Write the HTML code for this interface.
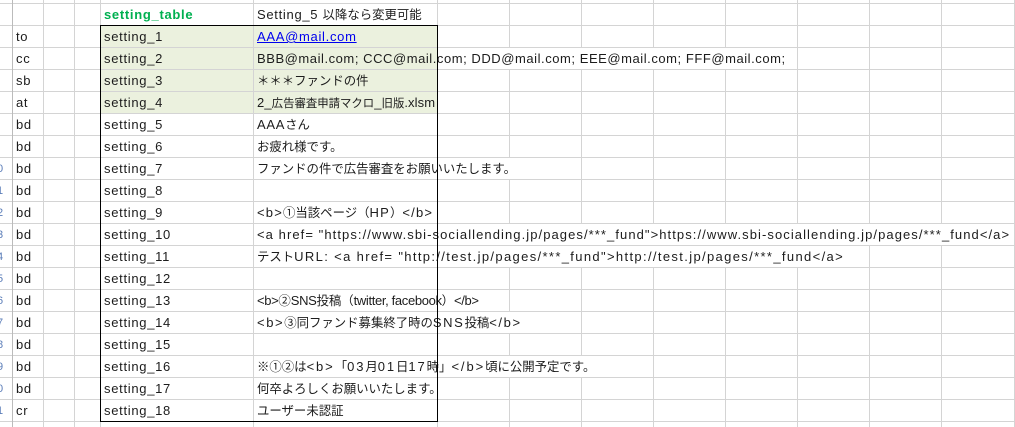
<!DOCTYPE html>
<html><head><meta charset="utf-8"><style>
body{margin:0;width:1015px;height:427px;overflow:hidden;background:#fff;position:relative;font-family:"Liberation Sans","Noto Sans CJK JP",sans-serif;font-size:13px;letter-spacing:.7px;color:#1c1c1c}
.h{position:absolute;left:0;width:1015px;height:1px;background:#d4d4d4}
.v{position:absolute;top:0;height:427px;width:1px;background:#d4d4d4}
.t{position:absolute;height:21px;line-height:21px;white-space:nowrap;background:#fff;padding-left:3px;box-sizing:border-box;overflow:hidden}
.j{font-size:12.4px;letter-spacing:0}
.g{background:#ebf1de}
.n{position:absolute;left:0;width:12px;height:21px;line-height:22px;overflow:hidden;font-size:11px;letter-spacing:0;color:#5b7db8}
.n span{position:absolute;left:-3px}
</style></head><body>
<div class="h" style="top:3px"></div><div class="h" style="top:25px"></div><div class="h" style="top:47px"></div><div class="h" style="top:69px"></div><div class="h" style="top:91px"></div><div class="h" style="top:113px"></div><div class="h" style="top:135px"></div><div class="h" style="top:157px"></div><div class="h" style="top:179px"></div><div class="h" style="top:201px"></div><div class="h" style="top:223px"></div><div class="h" style="top:245px"></div><div class="h" style="top:267px"></div><div class="h" style="top:289px"></div><div class="h" style="top:311px"></div><div class="h" style="top:333px"></div><div class="h" style="top:355px"></div><div class="h" style="top:377px"></div><div class="h" style="top:399px"></div><div class="h" style="top:421px"></div>
<div class="v" style="left:12px;background:#bbb"></div><div class="v" style="left:43px"></div><div class="v" style="left:74px"></div><div class="v" style="left:100px"></div><div class="v" style="left:253px"></div><div class="v" style="left:437px"></div><div class="v" style="left:509px"></div><div class="v" style="left:581px"></div><div class="v" style="left:653px"></div><div class="v" style="left:725px"></div><div class="v" style="left:797px"></div><div class="v" style="left:869px"></div><div class="v" style="left:941px"></div><div class="v" style="left:1014px"></div>

<div class="t" style="left:13px;top:26px;width:30px">to</div>
<div class="t" style="left:13px;top:48px;width:30px">cc</div>
<div class="t" style="left:13px;top:70px;width:30px">sb</div>
<div class="t" style="left:13px;top:92px;width:30px">at</div>
<div class="t" style="left:13px;top:114px;width:30px">bd</div>
<div class="t" style="left:13px;top:136px;width:30px">bd</div>
<div class="t" style="left:13px;top:158px;width:30px">bd</div>
<div class="t" style="left:13px;top:180px;width:30px">bd</div>
<div class="t" style="left:13px;top:202px;width:30px">bd</div>
<div class="t" style="left:13px;top:224px;width:30px">bd</div>
<div class="t" style="left:13px;top:246px;width:30px">bd</div>
<div class="t" style="left:13px;top:268px;width:30px">bd</div>
<div class="t" style="left:13px;top:290px;width:30px">bd</div>
<div class="t" style="left:13px;top:312px;width:30px">bd</div>
<div class="t" style="left:13px;top:334px;width:30px">bd</div>
<div class="t" style="left:13px;top:356px;width:30px">bd</div>
<div class="t" style="left:13px;top:378px;width:30px">bd</div>
<div class="t" style="left:13px;top:400px;width:30px">cr</div>

<div class="n" style="top:158px"><span>0</span></div><div class="n" style="top:180px"><span>1</span></div><div class="n" style="top:202px"><span>2</span></div><div class="n" style="top:224px"><span>3</span></div><div class="n" style="top:246px"><span>4</span></div><div class="n" style="top:268px"><span>5</span></div><div class="n" style="top:290px"><span>6</span></div><div class="n" style="top:312px"><span>7</span></div><div class="n" style="top:334px"><span>8</span></div><div class="n" style="top:356px"><span>9</span></div><div class="n" style="top:378px"><span>0</span></div><div class="n" style="top:400px"><span>1</span></div>

<div class="t" style="left:101px;top:4px;width:152px;color:#00b050;font-weight:bold">setting_table</div>
<div class="t" style="left:254px;top:4px;width:183px">Setting_5 <span class="j">以降なら変更可能</span></div>

<div class="t g" style="left:101px;top:26px;width:152px">setting_1</div>
<div class="t g" style="left:101px;top:48px;width:152px">setting_2</div>
<div class="t g" style="left:101px;top:70px;width:152px">setting_3</div>
<div class="t g" style="left:101px;top:92px;width:152px">setting_4</div>
<div class="t" style="left:101px;top:114px;width:152px">setting_5</div>
<div class="t" style="left:101px;top:136px;width:152px">setting_6</div>
<div class="t" style="left:101px;top:158px;width:152px">setting_7</div>
<div class="t" style="left:101px;top:180px;width:152px">setting_8</div>
<div class="t" style="left:101px;top:202px;width:152px">setting_9</div>
<div class="t" style="left:101px;top:224px;width:152px">setting_10</div>
<div class="t" style="left:101px;top:246px;width:152px">setting_11</div>
<div class="t" style="left:101px;top:268px;width:152px">setting_12</div>
<div class="t" style="left:101px;top:290px;width:152px">setting_13</div>
<div class="t" style="left:101px;top:312px;width:152px">setting_14</div>
<div class="t" style="left:101px;top:334px;width:152px">setting_15</div>
<div class="t" style="left:101px;top:356px;width:152px">setting_16</div>
<div class="t" style="left:101px;top:378px;width:152px">setting_17</div>
<div class="t" style="left:101px;top:400px;width:152px">setting_18</div>

<div class="t g" style="left:254px;top:26px;width:183px"><span style="color:#0000ee;text-decoration:underline">AAA@mail.com</span></div>
<div class="t" style="left:254px;top:48px;width:543px;letter-spacing:.55px;background:linear-gradient(90deg,#ebf1de 183px,#fff 183px)">BBB@mail.com; CCC@mail.com; DDD@mail.com; EEE@mail.com; FFF@mail.com;</div>
<div class="t g" style="left:254px;top:70px;width:183px"><span class="j">＊＊＊ファンドの件</span></div>
<div class="t g" style="left:254px;top:92px;width:183px;letter-spacing:.1px">2_<span class="j" style="font-size:11.4px">広告審査申請マクロ</span>_<span class="j" style="font-size:11.4px">旧版</span>.xlsm</div>
<div class="t" style="left:254px;top:114px;width:183px">AAA<span class="j">さん</span></div>
<div class="t" style="left:254px;top:136px;width:183px"><span class="j">お疲れ様です。</span></div>
<div class="t" style="left:254px;top:158px;width:327px"><span class="j">ファンドの件で広告審査をお願いいたします。</span></div>
<div class="t" style="left:254px;top:202px;width:255px;letter-spacing:1.2px">&lt;b&gt;<span class="j">①当該ページ（</span>HP<span class="j">）</span>&lt;/b&gt;</div>
<div class="t" style="left:254px;top:224px;width:760px;letter-spacing:1.07px">&lt;a href= "https://www.sbi-sociallending.jp/pages/***_fund"&gt;https://www.sbi-sociallending.jp/pages/***_fund&lt;/a&gt;</div>
<div class="t" style="left:254px;top:246px;width:615px;letter-spacing:1.35px"><span class="j">テスト</span>URL: &lt;a href= "http://test.jp/pages/***_fund"&gt;http://test.jp/pages/***_fund&lt;/a&gt;</div>
<div class="t" style="left:254px;top:290px;width:255px;letter-spacing:-.35px">&lt;b&gt;<span class="j">②</span>SNS<span class="j">投稿（</span>twitter, facebook<span class="j">）</span>&lt;/b&gt;</div>
<div class="t" style="left:254px;top:312px;width:327px;letter-spacing:1.6px">&lt;b&gt;<span class="j">③同ファンド募集終了時の</span>SNS<span class="j">投稿</span>&lt;/b&gt;</div>
<div class="t" style="left:254px;top:356px;width:399px;letter-spacing:1.9px"><span class="j">※①②は</span>&lt;b&gt;<span class="j">「</span>03<span class="j">月</span>01<span class="j">日</span>17<span class="j">時」</span>&lt;/b&gt;<span class="j">頃に公開予定です。</span></div>
<div class="t" style="left:254px;top:378px;width:255px"><span class="j">何卒よろしくお願いいたします。</span></div>
<div class="t" style="left:254px;top:400px;width:183px"><span class="j">ユーザー未認証</span></div>

<div style="position:absolute;left:100px;top:25px;width:336px;height:395px;border:1px solid #000"></div>
</body></html>
